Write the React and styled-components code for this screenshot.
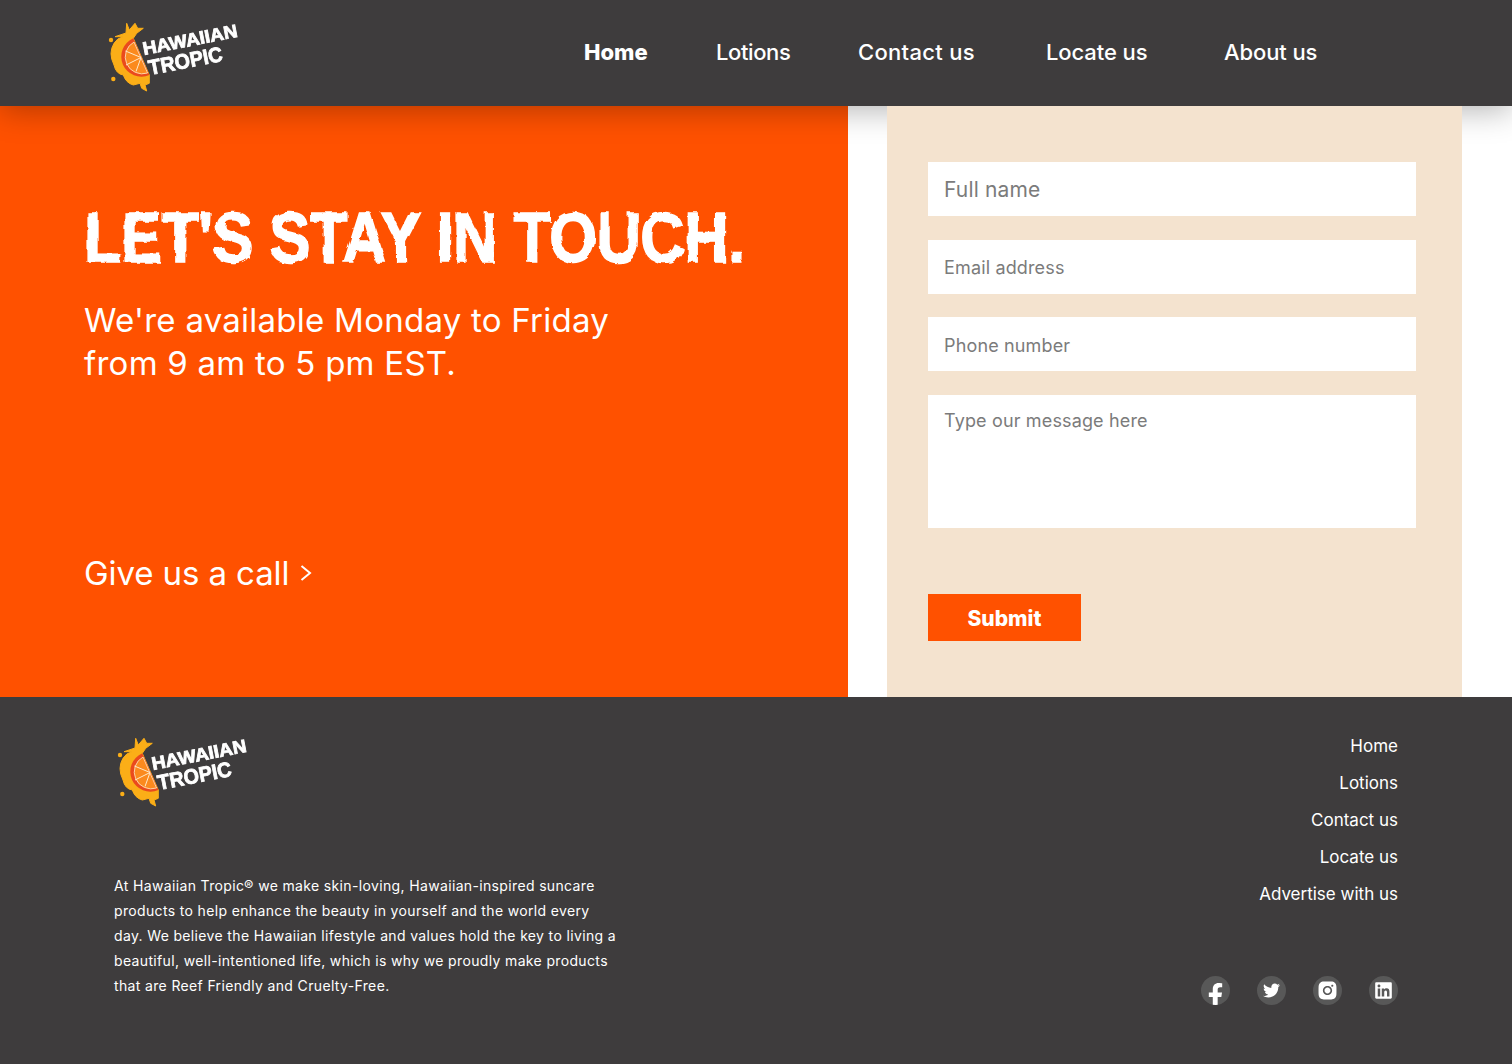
import React from 'react';
import styled, { createGlobalStyle } from 'styled-components';
import { FaFacebookF, FaTwitter, FaLinkedin } from 'react-icons/fa';
import { AiFillInstagram } from 'react-icons/ai';

const GlobalStyle = createGlobalStyle`
    html, body {
        margin: 0;
        padding: 0;
        background: #fff;
    }
    * {
        box-sizing: border-box;
    }
`

const font = `Inter, "Open Sans", sans-serif`;

const Page = styled.div`
    width: 1512px;
    height: 1064px;
    overflow: hidden;
    font-family: ${font};
    color: #fff;
`

const Header = styled.header`
    position: relative;
    z-index: 2;
    height: 106px;
    background: #3e3c3d;
    box-shadow: 0 4px 30px rgba(0, 0, 0, 0.3);
    padding: 20px 0 0 108px;
    display: flex;
`

const Nav = styled.nav`
    margin-left: 344px;
    height: 64px;
    display: flex;
    align-items: center;
`

const NavLink = styled.a`
    width: ${props => props.$width}px;
    font-size: 22px;
    font-weight: ${props => props.$active ? 800 : 500};
    letter-spacing: ${props => props.$tracking}px;
    white-space: nowrap;
`

const Main = styled.main`
    height: 591px;
    display: flex;
    background: #fff;
`

const Hero = styled.section`
    width: 848px;
    background: #ff5100;
    padding: 96px 0 0 84px;
    display: flex;
    flex-direction: column;
`

const Title = styled.h1`
    margin: 0;
    font-family: "Liberation Sans", sans-serif;
    font-size: 71px;
    line-height: 72px;
    font-weight: 700;
    letter-spacing: -0.6px;
    -webkit-text-stroke: 1.5px #fff;
    white-space: nowrap;
    transform: scaleX(0.865);
    transform-origin: left center;
    filter: url(#rough);
`

const Lead = styled.p`
    margin: 25px 0 0;
    font-size: 33px;
    line-height: 43px;
    font-weight: 400;
    letter-spacing: 0.25px;
`

const CallLink = styled.a`
    margin-top: 166px;
    display: flex;
    align-items: center;
    gap: 11px;
    font-size: 33px;
    line-height: 44px;
    letter-spacing: -0.1px;
`

const FormColumn = styled.section`
    width: 575px;
    margin-left: 39px;
    position: relative;
    z-index: 3;
    background: #f4e3cf;
    padding: 56px 46px 0 41px;
`

const Form = styled.form`
    display: flex;
    flex-direction: column;
`

const Field = styled.input`
    display: block;
    width: 100%;
    height: 54px;
    margin-bottom: 23.5px;
    border: 0;
    background: #fff;
    padding: ${props => props.$big ? '0 16px' : '2px 16px 0'};
    font-family: ${font};
    font-size: ${props => props.$big ? 21 : 18}px;
    letter-spacing: 0.15px;
    &::placeholder {
        color: #7b7b7b;
        opacity: 1;
    }
`

const MessageField = styled.textarea`
    display: block;
    width: 100%;
    height: 133px;
    border: 0;
    background: #fff;
    padding: 14px 16px;
    resize: none;
    font-family: ${font};
    font-size: 18px;
    line-height: 24px;
    letter-spacing: 0.15px;
    &::placeholder {
        color: #7b7b7b;
        opacity: 1;
    }
`

const Submit = styled.button`
    width: 153px;
    height: 47px;
    margin-top: 66px;
    padding: 2px 0 0;
    border: 0;
    background: #ff5100;
    color: #fff;
    font-family: ${font};
    font-size: 21px;
    font-weight: 800;
`

const Footer = styled.footer`
    height: 367px;
    background: #3e3c3d;
    padding: 38px 114px 0;
    display: flex;
    justify-content: space-between;
`

const FooterLeft = styled.div`
    width: 520px;
    padding-left: 3px;
`

const About = styled.p`
    margin: 66px 0 0 -3px;
    font-size: 14px;
    line-height: 25px;
    letter-spacing: 0.35px;
    white-space: pre-line;
`

const FooterRight = styled.div`
    margin-top: -7px;
    display: flex;
    flex-direction: column;
    align-items: flex-end;
`

const FooterLink = styled.a`
    font-size: 17px;
    line-height: 37px;
    height: 37px;
`

const Socials = styled.div`
    margin-top: 63px;
    display: flex;
    gap: 27px;
`

const SocialIcon = styled.a`
    width: 29px;
    height: 29px;
    border-radius: 50%;
    background: #585858;
    overflow: hidden;
    display: flex;
    justify-content: center;
    align-items: ${props => props.$bottom ? 'flex-end' : 'center'};
    color: #fff;
    font-size: ${props => props.$size}px;
`

const LogoMark = styled.svg`
    display: block;
    flex: none;
`

function Logo() {
    return (
        <LogoMark width="132" height="72" viewBox="0 0 132 72">
            <path
                d="M18.7 3.3 L21.3 10 L27 3.3 L29.7 8.3 L35.3 8.3 L28.7 13.3 L25.3 18.3 L41.3 55 L41.3 63.3 L37 65 L38.7 71 L33.7 68.3 L32 63.3 L25.3 65 Q18 63 15.3 55 Q8 54 6 45 Q0 33 6 23.3 Q9 18 15.3 16.7 L7 16.7 L18 13 Z"
                fill="#fbae17"
                stroke="#fbae17"
                strokeLinejoin="round"
            />
            <circle cx="3" cy="20" r="2.2" fill="#fbae17" />
            <circle cx="5.3" cy="59" r="2.2" fill="#fbae17" />
            <path d="M25.3 18.3 A20 20 0 0 0 41.3 55 Z" fill="#ea4a1d" />
            <path d="M26 22 A17 17 0 0 0 39.6 53 Z" fill="#fb8a1e" stroke="#ffe9c9" strokeWidth="0.8" />
            <g stroke="#ffe9c9" strokeWidth="1">
                <path d="M33 37.5 L17.5 31" />
                <path d="M33 37.5 L18 45" />
                <path d="M33 37.5 L28 51.5" />
            </g>
            <g filter="url(#rough-small)" fill="#fff" stroke="#fff" strokeWidth="0.8" fontFamily='"Liberation Sans", sans-serif' fontWeight="700">
                <text x="36" y="35" fontSize="18" textLength="96" lengthAdjust="spacingAndGlyphs" transform="rotate(-11 36 35)">HAWAIIAN</text>
                <text x="42" y="55" fontSize="21" textLength="75" lengthAdjust="spacingAndGlyphs" transform="rotate(-11 42 55)">TROPIC</text>
            </g>
        </LogoMark>
    );
}

const navLinks = [
    { label: 'Home', width: 132, active: true, tracking: 0 },
    { label: 'Lotions', width: 142, tracking: -0.4 },
    { label: 'Contact us', width: 188, tracking: 0.3 },
    { label: 'Locate us', width: 178, tracking: -0.1 },
    { label: 'About us', width: 100, tracking: -0.1 },
];

const footerLinks = ['Home', 'Lotions', 'Contact us', 'Locate us', 'Advertise with us'];

export default function App() {
    return (
        <Page>
            <GlobalStyle />
            <svg width="0" height="0" style={{ position: 'absolute' }}>
                <filter id="rough">
                    <feTurbulence type="fractalNoise" baseFrequency="0.09" numOctaves="2" seed="4" />
                    <feDisplacementMap in="SourceGraphic" scale="5" />
                </filter>
                <filter id="rough-small">
                    <feTurbulence type="fractalNoise" baseFrequency="0.2" numOctaves="1" seed="2" />
                    <feDisplacementMap in="SourceGraphic" scale="1.5" />
                </filter>
            </svg>
            <Header>
                <Logo />
                <Nav>
                    {navLinks.map(link => (
                        <NavLink key={link.label} $width={link.width} $active={link.active} $tracking={link.tracking}>{link.label}</NavLink>
                    ))}
                </Nav>
            </Header>
            <Main>
                <Hero>
                    <Title>LET'S STAY IN TOUCH.</Title>
                    <Lead>We're available Monday to Friday<br />from 9 am to 5 pm EST.</Lead>
                    <CallLink>
                        Give us a call
                        <svg width="12" height="18" viewBox="0 0 12 18" fill="none" stroke="#fff" strokeWidth="2">
                            <path d="M1.5 2 L10 9 L1.5 16" />
                        </svg>
                    </CallLink>
                </Hero>
                <FormColumn>
                    <Form>
                        <Field $big placeholder="Full name" />
                        <Field placeholder="Email address" />
                        <Field placeholder="Phone number" />
                        <MessageField placeholder="Type our message here" />
                        <Submit type="button">Submit</Submit>
                    </Form>
                </FormColumn>
            </Main>
            <Footer>
                <FooterLeft>
                    <Logo />
                    <About>
                        At Hawaiian Tropic® we make skin-loving, Hawaiian-inspired suncare{'\n'}
                        products to help enhance the beauty in yourself and the world every{'\n'}
                        day. We believe the Hawaiian lifestyle and values hold the key to living a{'\n'}
                        beautiful, well-intentioned life, which is why we proudly make products{'\n'}
                        that are Reef Friendly and Cruelty-Free.
                    </About>
                </FooterLeft>
                <FooterRight>
                    {footerLinks.map(label => <FooterLink key={label}>{label}</FooterLink>)}
                    <Socials>
                        <SocialIcon $bottom $size={25}><FaFacebookF style={{ marginBottom: -3 }} /></SocialIcon>
                        <SocialIcon $size={17}><FaTwitter /></SocialIcon>
                        <SocialIcon $size={23}><AiFillInstagram /></SocialIcon>
                        <SocialIcon $size={19}><FaLinkedin /></SocialIcon>
                    </Socials>
                </FooterRight>
            </Footer>
        </Page>
    );
}
